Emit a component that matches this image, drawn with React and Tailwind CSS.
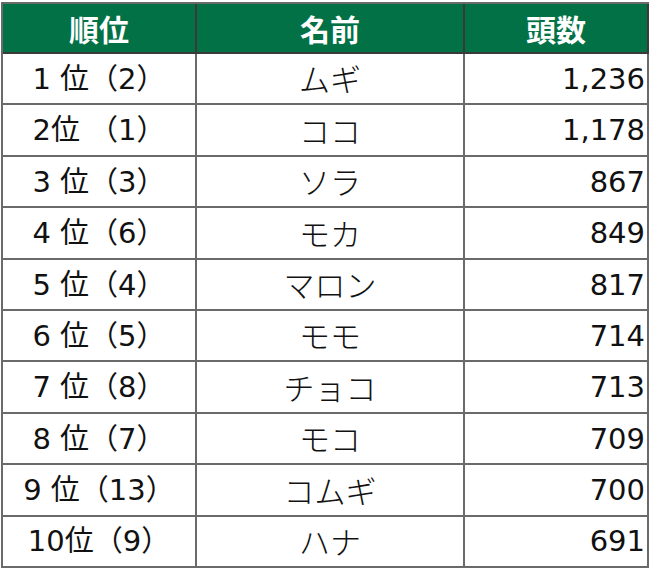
import React from "react";

const rows = [
  ["1 位（2）", "ムギ", "1,236"],
  ["2位 （1）", "ココ", "1,178"],
  ["3 位（3）", "ソラ", "867"],
  ["4 位（6）", "モカ", "849"],
  ["5 位（4）", "マロン", "817"],
  ["6 位（5）", "モモ", "714"],
  ["7 位（8）", "チョコ", "713"],
  ["8 位（7）", "モコ", "709"],
  ["9 位（13）", "コムギ", "700"],
  ["10位（9）", "ハナ", "691"],
];

export default function App() {
  return (
    <div className="w-[650px] h-[581px] bg-white pt-[2px] pl-[1px] font-['DejaVu_Sans','Noto_Sans_CJK_JP',sans-serif] text-[29px] text-[#111]">
      <div className="w-[648px] border-l-2 border-t-2 border-[#6a6a6a]">
        <div className="grid grid-cols-[194px_268px_184px] h-[50px] bg-[#037146] text-white font-bold font-['Noto_Sans_CJK_JP',sans-serif] text-[30px]">
          <div className="flex items-center justify-center border-r-2 border-b-2 border-[#3a3a3a]">順位</div>
          <div className="flex items-center justify-center border-r-2 border-b-2 border-[#3a3a3a]">名前</div>
          <div className="flex items-center justify-center border-r-2 border-b-2 border-[#3a3a3a]">頭数</div>
        </div>
        {rows.map((r, i) => (
          <div key={i} className="grid grid-cols-[194px_268px_184px] h-[51.4px]">
            <div className="flex items-center justify-center pt-[2px] border-r-2 border-b-2 border-[#6a6a6a] whitespace-pre">{r[0]}</div>
            <div className="flex items-center justify-center border-r-2 border-b-2 border-[#6a6a6a] font-['Noto_Sans_CJK_JP',sans-serif] font-light text-[31px]">{r[1]}</div>
            <div className="flex items-center justify-end pt-[2px] pr-[2px] border-r-2 border-b-2 border-[#6a6a6a]">{r[2]}</div>
          </div>
        ))}
      </div>
    </div>
  );
}
